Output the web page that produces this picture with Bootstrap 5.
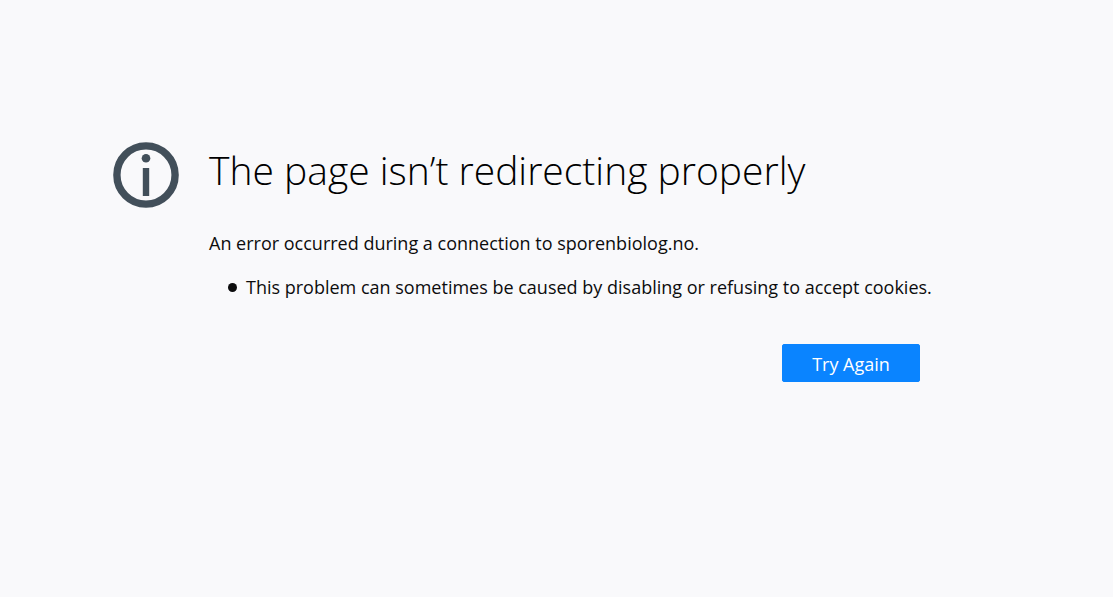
<!DOCTYPE html>
<html lang="en">
<head>
<meta charset="utf-8">
<meta name="viewport" content="width=device-width, initial-scale=1">
<title>Problem loading page</title>
<link href="https://cdn.jsdelivr.net/npm/bootstrap@5.3.0/dist/css/bootstrap.min.css" rel="stylesheet">
<style>
body { background: #f9f9fb; color: #0c0c0d; font-family: "Open Sans", "Noto Sans", sans-serif; font-size: 18px; line-height: 28px; }
.error-page { max-width: 960px; padding: 142px 24px 24px 113px; gap: 30px; }
.error-icon { width: 66px; height: 66px; }
.error-title { font-size: 39px; font-weight: 300; line-height: 56px; margin-bottom: 31px; color: #000; }
.error-list { padding-left: 19px; margin-bottom: 43px; }
.error-list li { gap: 9px; }
.error-list li::before { content: ""; flex: none; width: 9px; height: 9px; margin-top: 10px; border-radius: 50%; background: currentColor; }
.error-actions { max-width: 711px; }
.btn-retry { --bs-btn-color: #fff; --bs-btn-bg: #0a84ff; --bs-btn-border-color: #0a84ff; --bs-btn-hover-color: #fff; --bs-btn-hover-bg: #0060df; --bs-btn-hover-border-color: #0060df; --bs-btn-font-size: 18px; --bs-btn-border-radius: 2px; min-width: 138px; height: 38px; padding: 2px 28px 0; }
@media (max-width: 767px) {
  .error-page { padding: 48px 24px; flex-direction: column; }
}
</style>
</head>
<body>
<main class="error-page d-flex align-items-start">
  <svg class="error-icon flex-shrink-0" viewBox="0 0 66 66" aria-hidden="true">
    <circle cx="33" cy="33" r="29.1" fill="none" stroke="#424f5a" stroke-width="7.4"/>
    <circle cx="33" cy="16.2" r="4.3" fill="#424f5a"/>
    <path d="M29.8 26h6.4v28h-6.4z" fill="#424f5a"/>
  </svg>
  <div class="error-body flex-grow-1">
    <h1 class="error-title">The page isn’t redirecting properly</h1>
    <p>An error occurred during a connection to sporenbiolog.no.</p>
    <ul class="error-list list-unstyled"><li class="d-flex">This problem can sometimes be caused by disabling or refusing to accept cookies.</li></ul>
    <div class="error-actions d-flex justify-content-end"><button type="button" class="btn btn-retry">Try Again</button></div>
  </div>
</main>
<script src="https://cdn.jsdelivr.net/npm/bootstrap@5.3.0/dist/js/bootstrap.bundle.min.js"></script>
</body>
</html>
